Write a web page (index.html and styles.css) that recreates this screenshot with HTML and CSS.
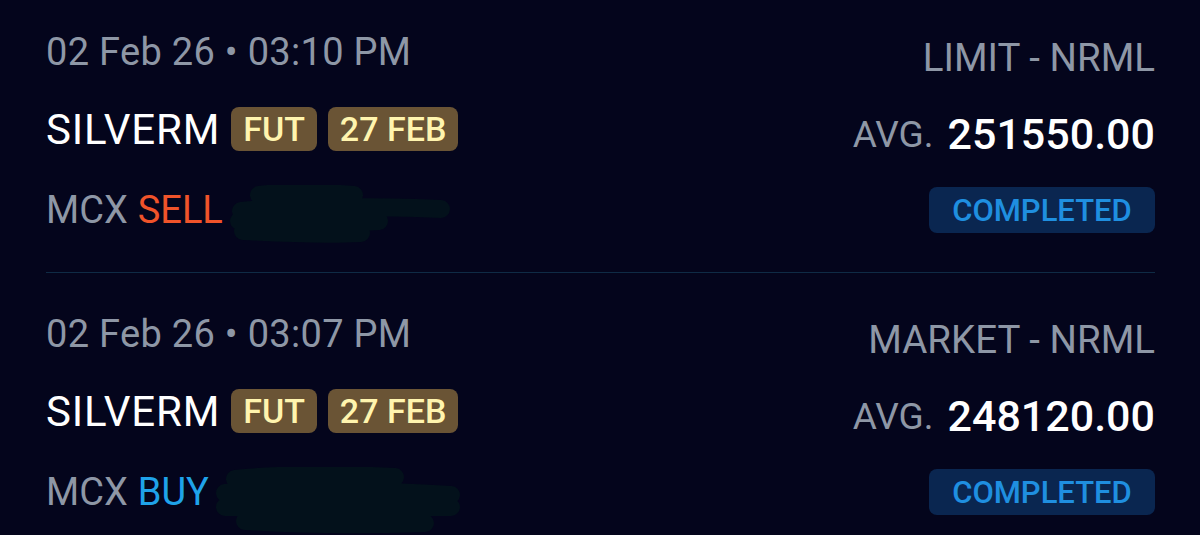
FILE: index.html
```html
<!DOCTYPE html>
<html>
<head>
<meta charset="utf-8">
<link rel="stylesheet" href="styles.css">
</head>
<body>
<div class="list">
  <div class="order first">
    <div class="col left">
      <div class="cell date">02 Feb 26 &bull; 03:10 PM</div>
      <div class="cell sym"><span class="name">SILVERM</span><span class="tag">FUT</span><span class="tag">27 FEB</span></div>
      <div class="cell exch">MCX <span class="sell">SELL</span>
        <svg class="redact r1" width="230" height="64" viewBox="0 0 230 64"><path d="M30 10 C60 6 100 8 125 10 M12 26 C80 20 160 22 212 24 M10 36 C60 34 120 38 150 36 M14 46 C50 48 90 50 132 48" stroke="#03111b" stroke-width="18" stroke-linecap="round" fill="none"/></svg>
      </div>
    </div>
    <div class="col right">
      <div class="cell low type">LIMIT - NRML</div>
      <div class="cell low avg"><span class="lbl">AVG.</span><span class="price">251550.00</span></div>
      <div class="cell"><span class="status">COMPLETED</span></div>
    </div>
  </div>
  <div class="order">
    <div class="col left">
      <div class="cell date">02 Feb 26 &bull; 03:07 PM</div>
      <div class="cell sym"><span class="name">SILVERM</span><span class="tag">FUT</span><span class="tag">27 FEB</span></div>
      <div class="cell exch">MCX <span class="buy">BUY</span>
        <svg class="redact r2" width="250" height="70" viewBox="0 0 250 70"><path d="M20 12 C80 6 140 8 180 10 M10 26 C80 22 170 24 236 28 M10 40 C90 38 170 40 236 40 M30 54 C90 58 150 58 210 56" stroke="#03111b" stroke-width="18" stroke-linecap="round" fill="none"/></svg>
      </div>
    </div>
    <div class="col right">
      <div class="cell low type">MARKET - NRML</div>
      <div class="cell low avg"><span class="lbl">AVG.</span><span class="price">248120.00</span></div>
      <div class="cell"><span class="status">COMPLETED</span></div>
    </div>
  </div>
</div>
</body>
</html>
```
FILE: styles.css
```css
html, body {
  margin: 0;
  padding: 0;
  background: #04051c;
  width: 1200px;
  height: 535px;
  overflow: hidden;
  font-family: Roboto, "Liberation Sans", sans-serif;
}
.list {
  padding: 0 45px 0 46px;
}
.order {
  display: flex;
  justify-content: space-between;
  padding: 39px 0;
  border-bottom: 1px solid #0f2b45;
}
.order.first {
  padding-top: 30px;
}
.col {
  display: flex;
  flex-direction: column;
  gap: 33px;
}
.col .cell:last-child {
  margin-top: 3px;
}
.cell {
  height: 44px;
  display: flex;
  align-items: center;
  white-space: nowrap;
}
.cell:last-child {
  height: 46px;
}
.right .cell {
  justify-content: flex-end;
}
.low {
  padding-top: 10px;
  box-sizing: border-box;
}
.date {
  font-size: 38px;
  letter-spacing: 0.3px;
  color: #8e97a6;
}
.name {
  font-size: 42px;
  letter-spacing: 0.8px;
  color: #ffffff;
  margin-right: 11px;
}
.tag {
  display: inline-flex;
  align-items: center;
  justify-content: center;
  height: 44px;
  padding: 0 12px;
  border-radius: 8px;
  background: #6a5435;
  color: #fff4ae;
  font-size: 34px;
  font-weight: 500;
  margin-right: 11px;
  box-sizing: border-box;
}
.exch {
  font-size: 38px;
  color: #8e97a6;
  position: relative;
}
.sell {
  color: #f0532a;
  margin-left: 10px;
}
.buy {
  color: #1fa3ea;
  margin-left: 10px;
}
.redact {
  display: block;
}
.r1 {
  margin-top: 14px;
  margin-left: 6px;
}
.r2 {
  margin-top: 20px;
  margin-left: 6px;
}
.type {
  font-size: 38.5px;
  color: #8e97a6;
}
.lbl {
  font-size: 37px;
  color: #8e97a6;
  margin-right: 14px;
}
.price {
  font-size: 43px;
  font-weight: 500;
  color: #ffffff;
}
.status {
  display: inline-flex;
  align-items: center;
  justify-content: center;
  height: 46px;
  width: 226px;
  border-radius: 8px;
  background: #0a2650;
  color: #1f8fe0;
  font-size: 31px;
  font-weight: 500;
}
```
